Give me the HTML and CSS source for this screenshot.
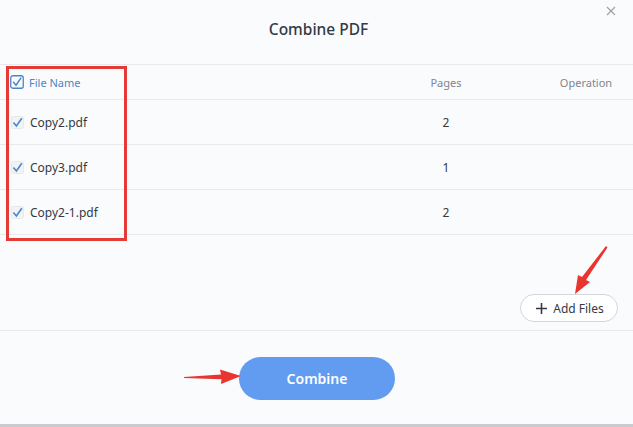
FILE: index.html
```html
<!DOCTYPE html>
<html lang="en">
<head>
  <meta charset="UTF-8" />
  <meta name="viewport" content="width=device-width, initial-scale=1" />
  <title>Combine PDF</title>
  <link rel="stylesheet" href="styles.css">
</head>
<body>
  <div class="dialog">
    <!-- Title bar -->
    <div class="dialog-head">
      <h1>Combine PDF</h1>
      <svg class="close" width="10" height="10" viewBox="0 0 10 10">
        <path d="M1 1 L9 9 M9 1 L1 9" stroke="#9a9ea5" stroke-width="1.1"/>
      </svg>
    </div>

    <!-- File table -->
    <div class="table">
      <div class="row head-row">
        <div class="cell name">
          <svg class="check all" width="14" height="14" viewBox="0 0 14 14">
            <rect x="0.75" y="0.75" width="12.5" height="12.5" rx="2" fill="none" stroke="#4a86c8" stroke-width="1.3"/>
            <path d="M3.2 6.8 L6 10.2 L11.2 2.6" fill="none" stroke="#4a86c8" stroke-width="1.5"/>
          </svg>
          <span>File Name</span>
        </div>
        <div class="cell center">Pages</div>
        <div class="cell center">Operation</div>
      </div>
      <div class="row">
        <div class="cell name">
          <svg class="check" width="13" height="13" viewBox="0 0 13 13">
            <rect x="0.5" y="0.5" width="12" height="12" rx="2" fill="#f1f3f7" stroke="#e6e8ec"/>
            <path d="M2.4 6.4 L5.4 10 L10.8 2.2" fill="none" stroke="#4a86c8" stroke-width="1.6"/>
          </svg>
          <span>Copy2.pdf</span>
        </div>
        <div class="cell center">2</div>
        <div class="cell center"></div>
      </div>
      <div class="row">
        <div class="cell name">
          <svg class="check" width="13" height="13" viewBox="0 0 13 13">
            <rect x="0.5" y="0.5" width="12" height="12" rx="2" fill="#f1f3f7" stroke="#e6e8ec"/>
            <path d="M2.4 6.4 L5.4 10 L10.8 2.2" fill="none" stroke="#4a86c8" stroke-width="1.6"/>
          </svg>
          <span>Copy3.pdf</span>
        </div>
        <div class="cell center">1</div>
        <div class="cell center"></div>
      </div>
      <div class="row">
        <div class="cell name">
          <svg class="check" width="13" height="13" viewBox="0 0 13 13">
            <rect x="0.5" y="0.5" width="12" height="12" rx="2" fill="#f1f3f7" stroke="#e6e8ec"/>
            <path d="M2.4 6.4 L5.4 10 L10.8 2.2" fill="none" stroke="#4a86c8" stroke-width="1.6"/>
          </svg>
          <span>Copy2-1.pdf</span>
        </div>
        <div class="cell center">2</div>
        <div class="cell center"></div>
      </div>
    </div>

    <!-- Add files -->
    <div class="add-area">
      <button class="add-btn" type="button">
        <svg class="plus" width="11" height="11" viewBox="0 0 11 11">
          <path d="M5.5 0 V11 M0 5.5 H11" stroke="#333a44" stroke-width="1.6"/>
        </svg>
        Add Files
      </button>
    </div>

    <!-- Footer -->
    <div class="dialog-foot">
      <button class="combine-btn" type="button">Combine</button>
    </div>

    <!-- Annotations -->
    <div class="mark-box"></div>
    <svg class="arrow arrow-add" width="40" height="52" viewBox="0 0 40 52">
      <polygon points="37,2 38.5,3.5 17,36 21,38 6,50 9,31 13,33" fill="#e8352f"/>
    </svg>
    <svg class="arrow arrow-combine" width="62" height="20" viewBox="0 0 62 20">
      <polygon points="2,10 39,7.5 38,2.5 59,9 39,17 39.5,12.2 2,11" fill="#e8352f"/>
    </svg>
  </div>
</body>
</html>
```

FILE: styles.css
```css
body {
  margin: 0;
  background-color: #c9cbcf;
  font-family: "Noto Sans", "Open Sans", sans-serif;
}
.dialog {
  position: relative;
  height: 424px;
  background-color: #fafbfd;
  color: #333a44;
}
.dialog-head {
  height: 65px;
  display: flex;
  align-items: center;
  justify-content: center;
  border-bottom: 1px solid #e8eaee;
  box-sizing: border-box;
}
.dialog-head h1 {
  margin: 0 0 6px 4px;
  font-size: 15.5px;
  font-weight: 500;
  color: #333a44;
}
.close {
  position: absolute;
  top: 6px;
  right: 17px;
}
.row {
  display: grid;
  grid-template-columns: 1fr 80px 80px;
  column-gap: 60px;
  padding: 0 7px 0 11px;
  height: 45px;
  align-items: center;
  border-bottom: 1px solid #e8eaee;
  box-sizing: border-box;
  font-size: 12px;
  color: #333a44;
}
.head-row {
  height: 35px;
  font-size: 11px;
  color: #80858d;
}
.cell.center {
  text-align: center;
}
.cell.name {
  display: flex;
  align-items: center;
  gap: 6px;
}
.head-row .cell.name {
  color: #4a86c8;
  gap: 5px;
}
.check {
  display: block;
  flex: none;
}
.check.all {
  margin-left: -1px;
}
.add-area {
  height: 96px;
  display: flex;
  justify-content: flex-end;
  align-items: flex-end;
  padding: 0 15px 8px 0;
  box-sizing: border-box;
  border-bottom: 1px solid #e8eaee;
}
.add-btn {
  height: 28px;
  width: 98px;
  border: 1px solid #d3d6db;
  border-radius: 14px;
  background-color: #fff;
  font-family: inherit;
  font-size: 12px;
  color: #333a44;
  display: flex;
  align-items: center;
  justify-content: center;
  gap: 6px;
  padding: 0 0 0 2px;
}
.plus {
  display: block;
  flex: none;
}
.dialog-foot {
  display: flex;
  justify-content: center;
  padding-top: 26px;
  padding-left: 1px;
}
.combine-btn {
  width: 156px;
  height: 43px;
  border: none;
  border-radius: 22px;
  background-color: #629cf0;
  color: #fff;
  font-family: inherit;
  font-size: 14px;
  font-weight: 600;
}
.mark-box {
  position: absolute;
  left: 6px;
  top: 66px;
  width: 121px;
  height: 175px;
  border: 3px solid #e53a36;
  box-sizing: border-box;
}
.arrow {
  position: absolute;
}
.arrow-add {
  left: 569px;
  top: 244px;
}
.arrow-combine {
  left: 182px;
  top: 367px;
}
```
